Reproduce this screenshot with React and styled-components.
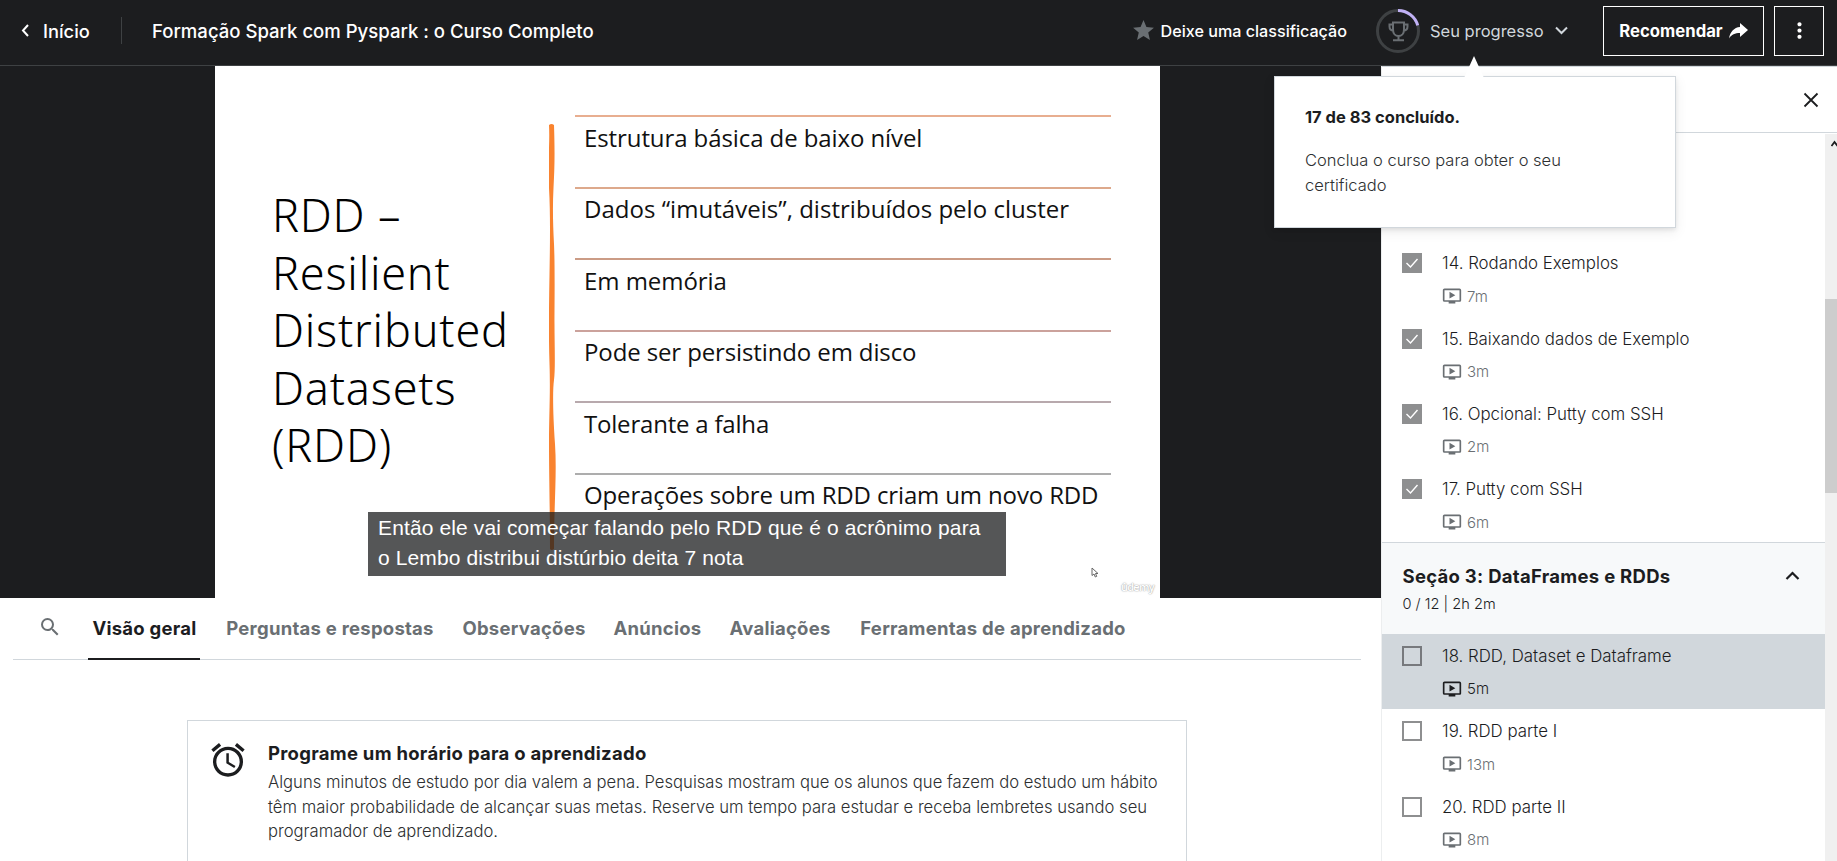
import React from 'react';
import styled, { createGlobalStyle } from 'styled-components';
import { MdAlarm, MdMoreVert, MdOndemandVideo, MdSearch, MdStar } from 'react-icons/md';

const INK = '#1c1d1f';
const GREY = '#6a6f73';
const LINE = '#d1d7dc';

const GlobalStyle = createGlobalStyle`
  * { box-sizing: border-box; }
  body {
    margin: 0;
    background: #fff;
    color: ${INK};
    font-family: Inter, "Liberation Sans", sans-serif;
    font-size: 16.5px;
    font-weight: 300;
  }
  svg { display: block; flex: none; }
`;

const Page = styled.div`
  display: flex;
  flex-direction: column;
  width: 1837px;
  height: 861px;
  overflow: hidden;
`;

/* Top bar */
const Header = styled.header`
  position: relative;
  display: flex;
  align-items: center;
  height: 66px;
  flex: none;
  padding: 0 13px 4px 21px;
  background: ${INK};
  border-bottom: 1px solid #3e4143;
  color: #fff;
`;

const BackLink = styled.a`
  display: flex;
  align-items: center;
  gap: 13px;
  width: 100px;
  font-size: 18.3px;
  font-weight: 500;
`;

const Divider = styled.span`
  width: 1px;
  height: 27px;
  background: #3e4143;
`;

const CourseTitle = styled.h1`
  margin: 0 0 0 30px;
  font-size: 18.56px;
  font-weight: 500;
`;

const RateButton = styled.div`
  display: flex;
  align-items: center;
  gap: 5px;
  margin-left: auto;
  color: #fff;
  font-size: 16.15px;
  font-weight: 500;
  svg { color: ${GREY}; }
`;

const Progress = styled.div`
  position: relative;
  display: flex;
  align-items: center;
  margin-left: 29px;
  width: 193px;
  color: ${LINE};
  font-size: 16.5px;
  font-weight: 400;
`;

const ProgressLabel = styled.span`
  margin: 0 11px 0 10px;
  white-space: nowrap;
`;

const OutlineButton = styled.button`
  display: flex;
  align-items: center;
  justify-content: center;
  gap: 6px;
  width: ${(p) => p.$width}px;
  height: 50px;
  margin: 0 0 0 ${(p) => p.$gap}px;
  padding: 0;
  background: transparent;
  border: 1px solid #fff;
  color: #fff;
  font: 700 16.7px Inter, sans-serif;
`;

/* Progress popover */
const Popover = styled.div`
  position: absolute;
  z-index: 5;
  top: 76px;
  left: 1274px;
  width: 402px;
  height: 152px;
  padding: 28px 30px;
  background: #fff;
  border: 1px solid ${LINE};
  box-shadow: 0 2px 4px rgba(0, 0, 0, 0.08), 0 4px 12px rgba(0, 0, 0, 0.08);
  color: #2d2f31;
  line-height: 25px;
`;

const Tip = styled.span`
  position: absolute;
  top: -21px;
  left: 189px;
  width: 20px;
  height: 22px;
  background: #fff;
  clip-path: polygon(50% 0, 100% 100%, 0 100%);
`;

const PopoverTitle = styled.strong`
  display: block;
  margin-bottom: 18px;
  color: ${INK};
  font-size: 16.5px;
  font-weight: 700;
`;

/* Body */
const Body = styled.div`
  display: flex;
  flex: 1;
  min-height: 0;
`;

const Main = styled.main`
  width: 1381px;
  flex: none;
  overflow: hidden;
`;

const Player = styled.section`
  display: flex;
  justify-content: center;
  height: 532px;
  padding-right: 6px;
  background: ${INK};
`;

const Slide = styled.div`
  position: relative;
  display: flex;
  width: 945px;
  background: #fff;
  color: #111;
`;

const SlideTitle = styled.h2`
  width: 334px;
  margin: 0;
  padding: 120px 0 0 57px;
  color: #000;
  font: 300 45px/57.6px "Noto Sans", "Open Sans", sans-serif;
  letter-spacing: 0.8px;
  white-space: nowrap;
`;

const Brush = styled.svg`
  margin-top: 58px;
`;

const Points = styled.ul`
  width: 536px;
  margin: 49px 0 0 19px;
  padding: 0;
  list-style: none;
`;

const Point = styled.li`
  height: 71.6px;
  padding: 3.500px 0 0 9px;
  border-top: 2px solid ${(p) => p.$line};
  font: 400 24px/34px "Open Sans", sans-serif;
  letter-spacing: ${(p) => p.$track}px;
  white-space: nowrap;
`;

const Caption = styled.div`
  position: absolute;
  left: 153px;
  top: 446px;
  width: 638px;
  height: 64px;
  padding: 1px 10px;
  background: rgba(28, 29, 31, 0.75);
  color: #fff;
  font: 400 21px/30px "Liberation Sans", Arial, sans-serif;
  letter-spacing: 0.12px;
  white-space: nowrap;
`;

const Cursor = styled.svg`
  position: absolute;
  left: 876px;
  top: 501px;
`;

const Watermark = styled.span`
  position: absolute;
  right: 6px;
  bottom: 4px;
  color: #fff;
  font: 600 11px/14px "Open Sans", sans-serif;
  letter-spacing: -0.7px;
  text-shadow: 0 0 1px #999, 0 0 2px #bbb;
`;

/* Tabs */
const Tabs = styled.nav`
  display: flex;
  align-items: stretch;
  height: 62px;
  margin: 0 20px 0 13px;
  padding-left: 23px;
  border-bottom: 1px solid ${LINE};
  color: ${GREY};
`;

const SearchTab = styled.div`
  display: flex;
  align-items: center;
  width: 52px;
  padding: 0 0 3px 2px;
`;

const Tab = styled.div`
  display: flex;
  align-items: center;
  justify-content: center;
  width: ${(p) => p.$width}px;
  margin-bottom: -1px;
  border-bottom: 2px solid ${(p) => (p.$active ? INK : 'transparent')};
  color: ${(p) => (p.$active ? INK : GREY)};
  font-size: 18.5px;
  font-weight: 700;
  letter-spacing: 0.25px;
  text-indent: 1px;
  white-space: nowrap;
`;

const Reminder = styled.section`
  display: flex;
  gap: 20px;
  width: 1000px;
  height: 200px;
  margin: 60px 0 0 187px;
  padding: 19px 20px;
  border: 1px solid ${LINE};
`;

const ReminderText = styled.p`
  margin: 0;
  color: #2d2f31;
  font-size: 16.64px;
  line-height: 24.6px;
  white-space: nowrap;
`;

const ReminderTitle = styled.h3`
  margin: 0 0 3px;
  font-size: 18.5px;
  line-height: 27px;
  font-weight: 700;
  letter-spacing: 0.27px;
`;

/* Course content sidebar */
const Sidebar = styled.aside`
  display: flex;
  flex-direction: column;
  flex: 1;
  border-left: 1px solid #eceeef;
`;

const SidebarHeader = styled.div`
  display: flex;
  align-items: center;
  justify-content: flex-end;
  height: 67px;
  padding-right: 18px;
  border-top: 1px solid ${LINE};
  border-bottom: 1px solid ${LINE};
`;

const SidebarScroll = styled.div`
  display: flex;
  flex: 1;
  min-height: 0;
`;

const Lessons = styled.div`
  flex: 1;
  padding-top: 108.300px;
  overflow: hidden;
`;

const Track = styled.div`
  display: flex;
  flex-direction: column;
  align-items: flex-end;
  width: 12px;
  margin-top: 1px;
  padding-top: 6px;
  background: #f0f0f0;
`;

const Thumb = styled.div`
  width: 12px;
  height: 194px;
  margin-top: 152px;
  background: #cdcdcd;
`;

const Lesson = styled.div`
  display: flex;
  gap: 20px;
  height: 75.3px;
  padding: 12px 20px 0;
  background: ${(p) => (p.$active ? LINE : 'transparent')};
`;

const Check = styled.span`
  display: flex;
  align-items: center;
  justify-content: center;
  width: 20px;
  height: 20px;
  flex: none;
  background: ${(p) => (p.$done ? '#8e8f90' : 'transparent')};
  border: 2px solid ${(p) => (p.$active ? '#77797d' : '#8e8f90')};
`;

const LessonName = styled.div`
  font-size: 16.85px;
  line-height: 20px;
`;

const Duration = styled.div`
  display: flex;
  align-items: center;
  gap: 5px;
  height: 20px;
  margin-top: 13px;
  color: ${(p) => (p.$active ? INK : GREY)};
  font-size: 15px;
`;

const SectionHeader = styled.div`
  display: flex;
  justify-content: space-between;
  height: 91.5px;
  padding: 19px 25px 0 20.500px;
  background: #f7f9fa;
  border-top: 1px solid ${LINE};
`;

const SectionTitle = styled.h3`
  margin: 0;
  font-size: 18.5px;
  line-height: 28px;
  font-weight: 700;
  letter-spacing: 0.28px;
`;

const SectionMeta = styled.div`
  font-size: 14.6px;
  line-height: 28px;
`;

const SectionToggle = styled.div`
  padding-top: 9px;
`;

const Chevron = ({ d, width, height, weight = 2 }) => (
  <svg width={width} height={height} viewBox={`0 0 ${width} ${height}`} fill="none" stroke="currentColor" strokeWidth={weight}>
    <path d={d} />
  </svg>
);

const TrophyRing = () => (
  <svg width="44" height="44" viewBox="0 0 44 44" fill="none">
    <circle cx="22" cy="22" r="20.5" stroke="#3e4143" strokeWidth="3" />
    <path d="M22 1.5A20.5 20.5 0 0 1 41.7 16.3" stroke="#c0b1f5" strokeWidth="3" />
    <g stroke={GREY} strokeWidth="2">
      <path d="M17 13.5h11v7c0 4-2.500 6.500-5.500 6.500S17 24.500 17 20.500z" />
      <path d="M17 15.500h-3.500v2c0 2.500 1.500 4 4 4M28 15.500h3.500v2c0 2.500-1.500 4-4 4M22.500 27v4M17 31.200h11" />
    </g>
  </svg>
);

const lessonsBefore = [
  ['14. Rodando Exemplos', '7m'],
  ['15. Baixando dados de Exemplo', '3m'],
  ['16. Opcional: Putty com SSH', '2m'],
  ['17. Putty com SSH', '6m'],
];

const lessonsAfter = [
  ['18. RDD, Dataset e Dataframe', '5m', true],
  ['19. RDD parte I', '13m'],
  ['20. RDD parte II', '8m'],
];

const points = [
  ['Estrutura básica de baixo nível', '#e8ae90', -0.09],
  ['Dados “imutáveis”, distribuídos pelo cluster', '#dda98c', 0.03],
  ['Em memória', '#cb9c86', -0.05],
  ['Pode ser persistindo em disco', '#cba29c', -0.12],
  ['Tolerante a falha', '#b8a9ad', -0.2],
  ['Operações sobre um RDD criam um novo RDD', '#adadad', -0.14],
];

const tabs = [
  ['Visão geral', 112, true],
  ['Perguntas e respostas', 259],
  ['Observações', 129],
  ['Anúncios', 138],
  ['Avaliações', 107],
  ['Ferramentas de aprendizado', 319],
];

function LessonRow({ name, time, done, active }) {
  return (
    <Lesson $active={active}>
      <Check $done={done} $active={active}>
        {done && (
          <svg width="14" height="12" viewBox="0 0 14 12" fill="none" stroke="#fff" strokeWidth="1.4">
            <path d="M1.500 6l4 4 7-8" />
          </svg>
        )}
      </Check>
      <div>
        <LessonName>{name}</LessonName>
        <Duration $active={active}>
          <MdOndemandVideo size={20} />
          {time}
        </Duration>
      </div>
    </Lesson>
  );
}

export default function App() {
  return (
    <Page>
      <GlobalStyle />
      <Header>
        <BackLink>
          <Chevron d="M7 1L2 6.500L7 12" width={9} height={13} />
          Início
        </BackLink>
        <Divider />
        <CourseTitle>Formação Spark com Pyspark : o Curso Completo</CourseTitle>
        <RateButton>
          <MdStar size={25} />
          Deixe uma classificação
        </RateButton>
        <Progress>
          <TrophyRing />
          <ProgressLabel>Seu progresso</ProgressLabel>
          <Chevron d="M1 1.500L6.500 7L12 1.500" width={13} height={9} />
        </Progress>
        <OutlineButton $width={161} $gap={34}>
          Recomendar
          <svg width="19" height="16" viewBox="0 0 19 16" fill="currentColor">
            <path d="M11 0l8 7-8 7v-4C6 10 2.500 11.500 0 15.500 1 9 5 4.500 11 4z" />
          </svg>
        </OutlineButton>
        <OutlineButton $width={50} $gap={10}>
          <MdMoreVert size={25} />
        </OutlineButton>
        <Popover>
          <Tip />
          <PopoverTitle>17 de 83 concluído.</PopoverTitle>
          Conclua o curso para obter o seu
          <br />
          certificado
        </Popover>
      </Header>
      <Body>
        <Main>
          <Player>
            <Slide>
              <SlideTitle>
                RDD –<br />
                Resilient<br />
                Distributed<br />
                Datasets<br />
                (RDD)
              </SlideTitle>
              <Brush width="7" height="426" viewBox="0 0 7 426" fill="#f9832f">
                <path d="M0 1Q2.500-1 5 1C6 30 5.500 45 4.500 64S4 100 5 120 5.500 180 5.500 200 6.500 245 5 256 4 290 6 320 5 380 5 425Q2.500 427 1 425C1 390 0 350 0 320S1.500 270 .5 240 0 180 .5 150 1.500 90 0 64 1 20 0 1z" />
              </Brush>
              <Points>
                {points.map(([text, line, track]) => (
                  <Point key={text} $line={line} $track={track}>{text}</Point>
                ))}
              </Points>
              <Caption>
                Então ele vai começar falando pelo RDD que é o acrônimo para
                <br />o Lembo distribui distúrbio deita 7 nota
              </Caption>
              <Cursor width="8" height="11" viewBox="0 0 8 11" fill="#fff" stroke="#666" strokeWidth="1">
                <path d="M1 1v7.500l2-1.500 1.300 3 1.400-.6L4.500 6.500H7z" />
              </Cursor>
              <Watermark>ûdemy</Watermark>
            </Slide>
          </Player>
          <Tabs>
            <SearchTab>
              <MdSearch size={24} />
            </SearchTab>
            {tabs.map(([label, width, active]) => (
              <Tab key={label} $width={width} $active={active}>{label}</Tab>
            ))}
          </Tabs>
          <Reminder>
            <MdAlarm size={40} />
            <div>
              <ReminderTitle>Programe um horário para o aprendizado</ReminderTitle>
              <ReminderText>
                Alguns minutos de estudo por dia valem a pena. Pesquisas mostram que os alunos que fazem do estudo um hábito
                <br />
                têm maior probabilidade de alcançar suas metas. Reserve um tempo para estudar e receba lembretes usando seu
                <br />
                programador de aprendizado.
              </ReminderText>
            </div>
          </Reminder>
        </Main>
        <Sidebar>
          <SidebarHeader>
            <svg width="16" height="16" viewBox="0 0 16 16" fill="none" stroke={INK} strokeWidth="1.800">
              <path d="M1.500 1.500l13 13M14.500 1.500l-13 13" />
            </svg>
          </SidebarHeader>
          <SidebarScroll>
            <Lessons>
              {lessonsBefore.map(([name, time]) => (
                <LessonRow key={name} name={name} time={time} done />
              ))}
              <SectionHeader>
                <div>
                  <SectionTitle>Seção 3: DataFrames e RDDs</SectionTitle>
                  <SectionMeta>0 / 12 | 2h 2m</SectionMeta>
                </div>
                <SectionToggle>
                  <Chevron d="M1.500 8L7.500 2L13.500 8" width={15} height={10} weight={2.2} />
                </SectionToggle>
              </SectionHeader>
              {lessonsAfter.map(([name, time, active]) => (
                <LessonRow key={name} name={name} time={time} active={active} />
              ))}
            </Lessons>
            <Track>
              <Chevron d="M.5 6L3.500 2L6.500 6" width={6} height={7} weight={1.8} />
              <Thumb />
            </Track>
          </SidebarScroll>
        </Sidebar>
      </Body>
    </Page>
  );
}
